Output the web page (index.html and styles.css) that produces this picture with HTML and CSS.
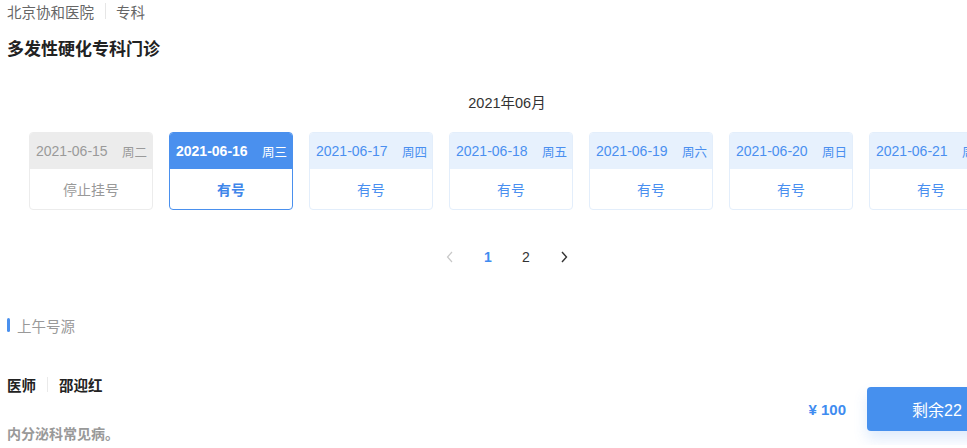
FILE: index.html
```html
<!DOCTYPE html>
<html lang="zh">
<head>
<meta charset="utf-8">
<link rel="stylesheet" href="styles.css">
</head>
<body>
<div class="page">
  <div class="crumb"><span>北京协和医院</span><i class="sep"></i><span>专科</span></div>
  <h1 class="title">多发性硬化专科门诊</h1>
  <div class="month">2021年06月</div>
  <div class="days">
    <div class="day off"><div class="dh"><span>2021-06-15</span><span>周二</span></div><div class="db">停止挂号</div></div>
    <div class="day sel"><div class="dh"><span>2021-06-16</span><span>周三</span></div><div class="db">有号</div></div>
    <div class="day"><div class="dh"><span>2021-06-17</span><span>周四</span></div><div class="db">有号</div></div>
    <div class="day"><div class="dh"><span>2021-06-18</span><span>周五</span></div><div class="db">有号</div></div>
    <div class="day"><div class="dh"><span>2021-06-19</span><span>周六</span></div><div class="db">有号</div></div>
    <div class="day"><div class="dh"><span>2021-06-20</span><span>周日</span></div><div class="db">有号</div></div>
    <div class="day"><div class="dh"><span>2021-06-21</span><span>周一</span></div><div class="db">有号</div></div>
  </div>
  <div class="pager">
    <span class="pg arrow dis"><svg width="8" height="12" viewBox="0 0 8 12"><path d="M6 1L1.5 6L6 11" fill="none" stroke="currentColor" stroke-width="1.2"/></svg></span>
    <span class="pg cur">1</span>
    <span class="pg">2</span>
    <span class="pg arrow"><svg width="8" height="12" viewBox="0 0 8 12"><path d="M2 1L6.5 6L2 11" fill="none" stroke="currentColor" stroke-width="1.4"/></svg></span>
  </div>
  <div class="section"><i class="bar"></i>上午号源</div>
  <div class="doc">
    <div class="info">
      <div class="name"><span>医师</span><i class="sep"></i><span>邵迎红</span></div>
      <div class="desc">内分泌科常见病。</div>
    </div>
    <div class="act">
      <span class="price">¥ 100</span>
      <span class="btn">剩余22</span>
    </div>
  </div>
</div>
</body>
</html>
```
FILE: styles.css
```css
html, body { margin: 0; padding: 0; overflow: hidden; background: #fff; }
body { font-family: "Liberation Sans", "Noto Sans CJK SC", sans-serif; color: #333; }
.page { width: 1000px; padding-left: 7px; box-sizing: content-box; }
.crumb { display: flex; align-items: center; height: 22px; font-size: 14.5px; color: #666; }
.crumb .sep { display: inline-block; width: 1px; height: 16px; background: #e6e6e6; margin: 0 10px 0 11px; }
.title { margin: 17px 0 0; height: 22px; line-height: 22px; font-size: 17px; font-weight: bold; color: #222; }
.month { margin-top: 31px; height: 22px; line-height: 22px; text-align: center; font-size: 14.5px; color: #333; }
.days { display: flex; gap: 16px; margin-top: 18px; padding-left: 22px; }
.day { flex: none; width: 124px; height: 78px; box-sizing: border-box; border: 1px solid #e3eefb; border-radius: 4px; overflow: hidden; display: flex; flex-direction: column; }
.dh { height: 36px; display: flex; align-items: center; justify-content: space-between; padding: 0 5px 0 6px; background: #e7f1fd; color: #4a8ff0; font-size: 14px; }
.dh span:last-child { font-size: 12.5px; }
.db { flex: 1; display: flex; align-items: center; justify-content: center; color: #4a8ff0; font-size: 14px; padding-bottom: 1px; }
.day.off { border-color: #ececec; }
.day.off .dh { background: #ececec; color: #9a9a9a; }
.day.off .db { color: #999; }
.day.sel { border-color: #4a90ee; }
.day.sel .dh { background: #4a90ee; color: #fff; font-weight: bold; }
.day.sel .dh span:last-child { font-weight: normal; }
.day.sel .db { font-weight: bold; color: #3f86ea; }
.pager { display: flex; justify-content: center; margin-top: 36px; height: 22px; }
.pg { width: 38px; height: 22px; display: flex; align-items: center; justify-content: center; font-size: 14px; color: #333; }
.pg.cur { color: #3f8cf0; font-weight: bold; }
.pg.dis { color: #c8c8c8; }
.pg.arrow { color: #333; }
.pg.arrow.dis { color: #c8c8c8; }
.section { margin-top: 46px; height: 22px; display: flex; align-items: center; font-size: 14.5px; color: #999; }
.section .bar { display: inline-block; width: 3px; height: 14px; border-radius: 2px; background: #4a90ee; margin-right: 7px; }
.doc { display: flex; align-items: center; justify-content: space-between; margin-top: 37px; }
.info { display: flex; flex-direction: column; gap: 28px; }
.name { display: flex; align-items: center; height: 22px; font-size: 14.5px; font-weight: bold; color: #222; }
.name .sep { display: inline-block; width: 1px; height: 15px; background: #eaeaea; margin: 0 11px 0 11px; }
.desc { height: 22px; line-height: 22px; font-size: 14px; font-weight: bold; color: #999; }
.act { display: flex; align-items: center; gap: 21px; }
.price { font-size: 15px; font-weight: bold; color: #3f8cf0; }
.btn { width: 140px; height: 44px; display: flex; align-items: center; justify-content: center; background: #4690ee; color: #fff; font-size: 16px; border-radius: 4px; box-shadow: 0 8px 14px rgba(70,144,238,0.18); }
```
